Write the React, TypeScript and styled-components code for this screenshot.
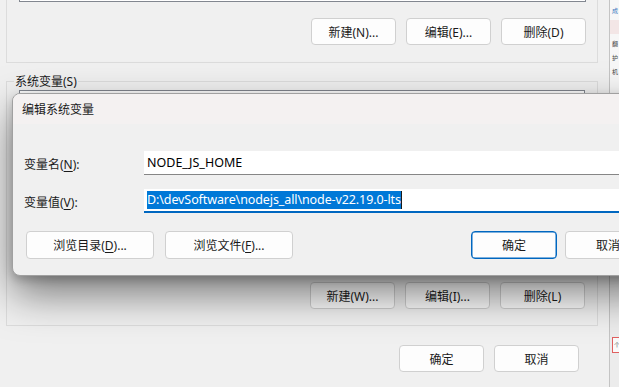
import styled, { createGlobalStyle } from 'styled-components';

const GlobalStyle = createGlobalStyle`
  html, body {
    margin: 0;
    padding: 0;
    background: #f0f0f0;
  }
  * {
    box-sizing: border-box;
  }
`;

const FONT = '"Noto Sans", "Noto Sans CJK SC", sans-serif';

const App = () => {
  return (
    <>
      <GlobalStyle />
      <Desktop>
        <EnvWindow>
          <UserGroup>
            <ListBox $height={112} />
            <ButtonRow>
              <Button>新建(N)...</Button>
              <Button>编辑(E)...</Button>
              <Button>删除(D)</Button>
            </ButtonRow>
          </UserGroup>

          <SystemGroup>
            <Legend>系统变量(S)</Legend>
            <ListBox $height={176} />
            <ButtonRow>
              <Button>新建(W)...</Button>
              <Button>编辑(I)...</Button>
              <Button>删除(L)</Button>
            </ButtonRow>
          </SystemGroup>

          <FooterRow>
            <Button>确定</Button>
            <Button>取消</Button>
          </FooterRow>
        </EnvWindow>

        <NeighbourWindow>
          <TinyLine $color="#3a78c0">成</TinyLine>
          <TinyBand />
          <TinyLine>翻</TinyLine>
          <TinyLine>护</TinyLine>
          <TinyLine>机</TinyLine>
          <NeighbourBottom>
            <RedTag>个</RedTag>
          </NeighbourBottom>
        </NeighbourWindow>

        <Dialog>
          <TitleBar>编辑系统变量</TitleBar>
          <DialogBody>
            <FormGrid>
              <FieldLabel>
                变量名(<u>N</u>):
              </FieldLabel>
              <TextField>NODE_JS_HOME</TextField>
              <FieldLabel>
                变量值(<u>V</u>):
              </FieldLabel>
              <TextField $focused>
                <Selection>D:\devSoftware\nodejs_all\node-v22.19.0-lts</Selection>
                <Caret />
              </TextField>
            </FormGrid>
            <DialogButtons>
              <WideButton>
                浏览目录(<u>D</u>)...
              </WideButton>
              <WideButton>
                浏览文件(<u>F</u>)...
              </WideButton>
              <Spacer />
              <DialogButton $primary>确定</DialogButton>
              <DialogButton>取消</DialogButton>
            </DialogButtons>
          </DialogBody>
        </Dialog>
      </Desktop>
    </>
  );
};

export default App;

const Desktop = styled.div`
  position: relative;
  width: 619px;
  height: 387px;
  overflow: hidden;
  background: #f0f0f0;
  font-family: ${FONT};
  font-size: 12px;
  color: #000;
`;

const EnvWindow = styled.div`
  position: absolute;
  left: 0;
  top: -120px;
  width: 610px;
  display: flex;
  flex-direction: column;
  padding-left: 6px;
  background: #f0f0f0;
`;

const UserGroup = styled.div`
  width: 592px;
  display: flex;
  flex-direction: column;
  padding: 9px 11px 17px 12px;
  border: 1px solid #dcdcdc;
`;

const SystemGroup = styled.fieldset`
  width: 592px;
  margin: 10px 0 0 0;
  min-width: 0;
  display: flex;
  flex-direction: column;
  padding: 0 12px 16px 12px;
  border: 1px solid #dcdcdc;
`;

const Legend = styled.legend`
  margin-left: -5px;
  padding: 0 1px;
  line-height: 17px;
  font-size: 12px;
  color: #1a1a1a;
`;

const ListBox = styled.div<{ $height: number }>`
  height: ${({ $height }) => $height}px;
  background: #ffffff;
  border: 1px solid #828790;
`;

const ButtonRow = styled.div`
  display: flex;
  justify-content: flex-end;
  gap: 10px;
  margin-top: 16px;
`;

const FooterRow = styled.div`
  display: flex;
  justify-content: flex-end;
  gap: 10px;
  margin-top: 19px;
  padding-right: 31px;
`;

const Button = styled.div`
  width: 85px;
  height: 27px;
  display: flex;
  align-items: center;
  justify-content: center;
  background: #fdfdfd;
  border: 1px solid #d0d0d0;
  border-radius: 4px;
  font-size: 12px;
  color: #1a1a1a;
`;

const NeighbourWindow = styled.div`
  position: absolute;
  left: 609px;
  top: 0;
  width: 10px;
  height: 387px;
  display: flex;
  flex-direction: column;
  padding: 4px 0 0 2px;
  background: #f7f7f7;
  border-left: 1px solid #c4c4c4;
  overflow: hidden;
`;

const TinyLine = styled.div<{ $color?: string }>`
  font-size: 6px;
  line-height: 14px;
  color: ${({ $color }) => $color || '#444'};
  white-space: nowrap;
`;

const TinyBand = styled.div`
  height: 14px;
  margin: 2px 0 3px -2px;
  background: #f3e6e6;
`;

const NeighbourBottom = styled.div`
  margin-top: auto;
  height: 110px;
  margin-left: -2px;
  padding: 60px 0 0 2px;
  background: #ececec;
`;

const RedTag = styled.div`
  height: 16px;
  border: 1px solid #e06060;
  border-right: none;
  font-size: 6px;
  line-height: 14px;
  padding-left: 1px;
  color: #555;
  background: #fafafa;
`;

const Dialog = styled.div`
  position: absolute;
  left: 12px;
  top: 93px;
  width: 652px;
  height: 183px;
  display: flex;
  flex-direction: column;
  background: #f0f0f0;
  border: 1px solid #a0a0a0;
  border-radius: 8px;
  overflow: hidden;
  box-shadow: 0 18px 42px rgba(0, 0, 0, 0.5), 0 4px 10px rgba(0, 0, 0, 0.2);
`;

const TitleBar = styled.div`
  height: 30px;
  display: flex;
  align-items: center;
  padding-left: 9px;
  background: #f4f1f1;
  font-size: 12px;
  color: #1a1a1a;
`;

const DialogBody = styled.div`
  display: flex;
  flex-direction: column;
  padding: 27px 12px 0 11px;
`;

const FormGrid = styled.div`
  display: grid;
  grid-template-columns: 120px 1fr;
  row-gap: 14px;
  align-items: center;
`;

const FieldLabel = styled.div`
  font-size: 12px;
  color: #1a1a1a;
  padding-top: 1px;

  u {
    text-underline-offset: 2px;
  }
`;

const TextField = styled.div<{ $focused?: boolean }>`
  height: 24px;
  display: flex;
  align-items: center;
  padding: 0 0 0 3px;
  background: #ffffff;
  border-bottom: ${({ $focused }) =>
    $focused ? '2px solid #0067c0' : '1px solid #868686'};
  font-size: 12.5px;
  color: #000;
  white-space: nowrap;
`;

const Selection = styled.span`
  background: #0078d7;
  color: #ffffff;
  line-height: 18px;
  letter-spacing: -0.1px;
`;

const Caret = styled.span`
  width: 1px;
  height: 18px;
  background: #1a1a1a;
`;

const DialogButtons = styled.div`
  display: flex;
  align-items: center;
  gap: 11px;
  margin-top: 18px;
  padding-left: 2px;
`;

const Spacer = styled.div`
  flex: 1;
`;

const WideButton = styled(Button)`
  width: 128px;
  height: 28px;

  u {
    text-underline-offset: 2px;
  }
`;

const DialogButton = styled(Button)<{ $primary?: boolean }>`
  width: 86px;
  height: 28px;
  margin-left: ${({ $primary }) => ($primary ? '0' : '-3px')};
  border: 1px solid ${({ $primary }) => ($primary ? '#0067c0' : '#d0d0d0')};
  box-shadow: ${({ $primary }) =>
    $primary ? 'inset 0 0 0 0.5px #0067c0' : 'none'};
`;
